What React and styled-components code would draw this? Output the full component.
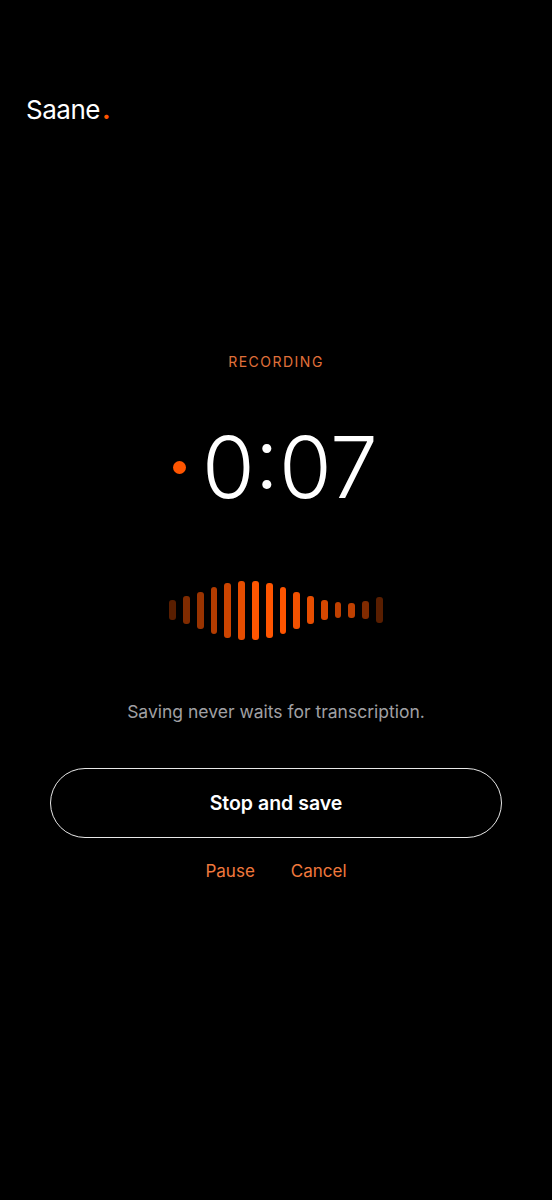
import React from 'react'
import styled, { createGlobalStyle } from 'styled-components'

const GlobalStyle = createGlobalStyle`
    html, body {
        margin: 0;
        padding: 0;
        background: #000;
        font-family: Inter, "Noto Sans", sans-serif;
    }
`

const Page = styled.div`
    width: 552px;
    height: 1200px;
    background: #000;
    display: flex;
    flex-direction: column;
`

const Header = styled.header`
    padding: 94px 26px 0;
    height: 32px;
`

const Logo = styled.div`
    font-size: 26px;
    line-height: 32px;
    letter-spacing: -0.5px;
    color: #fff;
`

const LogoDot = styled.span`
    margin-left: 2px;
    font-weight: 700;
    color: #ff5500;
`

const Main = styled.main`
    display: flex;
    flex-direction: column;
    align-items: center;
    padding-top: 226px;
`

const Status = styled.div`
    font-size: 14px;
    line-height: 20px;
    letter-spacing: 1.5px;
    color: #e0703a;
`

const TimerRow = styled.div`
    display: flex;
    align-items: center;
    gap: 16px;
    margin-top: 50px;
    margin-right: 1px;
    height: 90px;
`

const RecDot = styled.span`
    width: 13px;
    height: 13px;
    border-radius: 50%;
    background: #ff5500;
`

const Timer = styled.div`
    font-size: 85.5px;
    line-height: 90px;
    font-weight: 260;
    color: #fff;
`

const Wave = styled.div`
    display: flex;
    align-items: center;
    gap: 7px;
    height: 60px;
    margin-top: 68px;
`

const Bar = styled.span`
    width: 6.8px;
    height: ${p => p.$h}px;
    border-radius: 3px;
    background: #ff5500;
    opacity: ${p => p.$o};
`

const Hint = styled.p`
    margin: 61px 0 0;
    font-size: 17.5px;
    line-height: 22px;
    color: #a0a0a4;
`

const StopButton = styled.button`
    box-sizing: border-box;
    width: 452px;
    height: 70px;
    margin-top: 45px;
    border: 1.3px solid #e8e8e8;
    border-radius: 35px;
    background: none;
    color: #fff;
    font-family: inherit;
    font-size: 19.5px;
    font-weight: 600;
`

const Actions = styled.div`
    display: flex;
    gap: 36px;
    margin-top: 22px;
`

const TextButton = styled.button`
    padding: 0;
    border: 0;
    background: none;
    color: #f0783c;
    font-family: inherit;
    font-size: 17px;
    line-height: 22px;
    font-weight: 400;
`

const bars = [
    [20, 0.35], [28, 0.5], [37, 0.6], [47, 0.7], [55, 0.8], [59, 0.9], [59, 1], [55, 1],
    [47, 1], [37, 0.95], [28, 0.9], [20, 0.85], [16, 0.75], [15, 0.75], [18, 0.5], [26, 0.35],
]

const App = () => {
    return (
        <Page>
            <GlobalStyle />
            <Header>
                <Logo>Saane<LogoDot>.</LogoDot></Logo>
            </Header>
            <Main>
                <Status>RECORDING</Status>
                <TimerRow>
                    <RecDot />
                    <Timer>0:07</Timer>
                </TimerRow>
                <Wave>
                    {bars.map(([h, o], i) => (
                        <Bar key={i} $h={h} $o={o} />
                    ))}
                </Wave>
                <Hint>Saving never waits for transcription.</Hint>
                <StopButton>Stop and save</StopButton>
                <Actions>
                    <TextButton>Pause</TextButton>
                    <TextButton>Cancel</TextButton>
                </Actions>
            </Main>
        </Page>
    )
}

export default App
